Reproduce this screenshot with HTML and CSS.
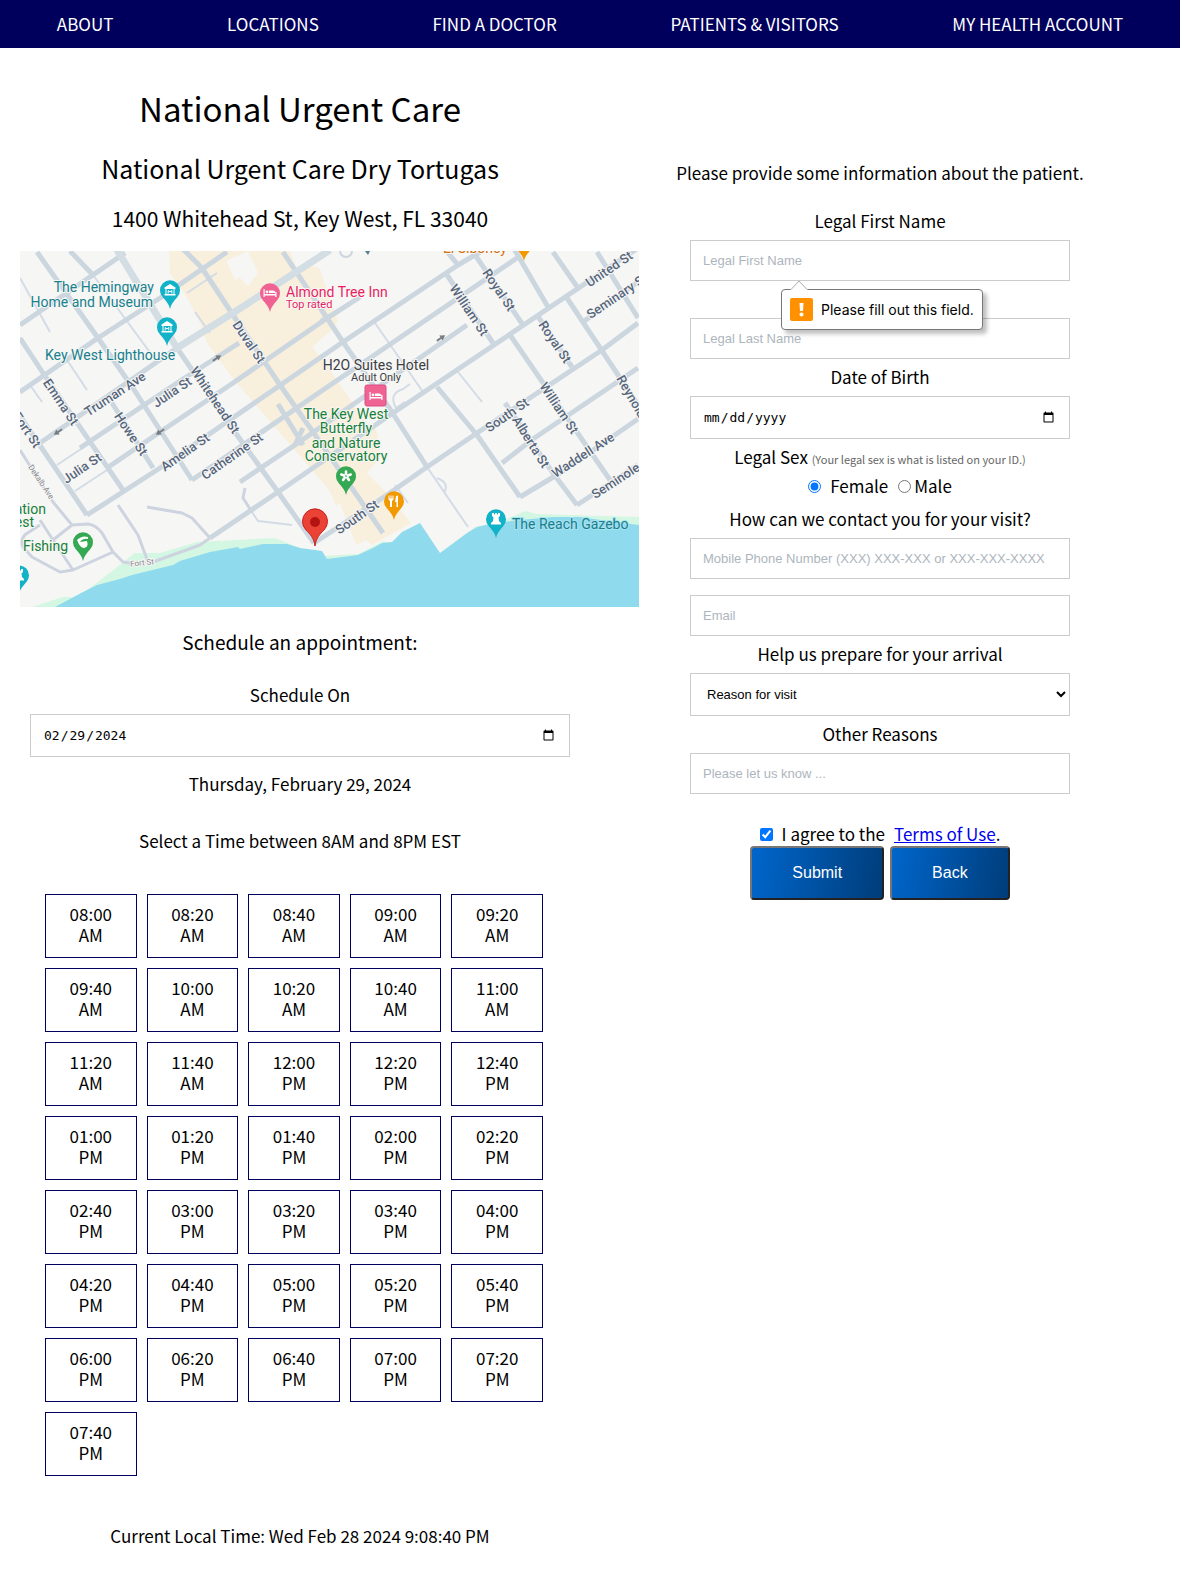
FILE: index.html
```html
<!DOCTYPE html>
<html lang="en">
<head>
<meta charset="utf-8">
<meta name="viewport" content="width=device-width, initial-scale=1">
<title>National Urgent Care</title>
<link rel="stylesheet" href="styles.css">
</head>
<body>
<nav class="nav">
  <a href="#about">ABOUT</a>
  <a href="#locations">LOCATIONS</a>
  <a href="#doctor">FIND A DOCTOR</a>
  <a href="#patients">PATIENTS &amp; VISITORS</a>
  <a href="#account">MY HEALTH ACCOUNT</a>
</nav>
<main class="page">
  <section class="schedule">
    <h1 class="title">National Urgent Care</h1>
    <h2 class="branch">National Urgent Care Dry Tortugas</h2>
    <p class="address">1400 Whitehead St, Key West, FL 33040</p>
    <svg class="map" viewBox="0 0 619 356" role="img" aria-label="Map of Key West">
      <defs>
        <path id="pin" d="M0 19C-1 14-4 11-7 7.500A10 10 0 1 1 7 7.500C4 11 1 14 0 19Z"/>
        <g id="museum" fill="#fff"><path d="M-5.500-2.500L0-6L5.500-2.500V-1H-5.500Z"/><path d="M-4.500-1H-3.500V4H-4.500ZM3.500-1H4.500V4H3.500ZM-5.500 4H5.500V5.500H-5.500Z"/><path d="M-1.800 3.500V0.500L0 2L1.800 0.500V3.500" fill="none" stroke="#fff"/></g>
        <g id="bed" fill="#fff"><path d="M-6.500-4H-5.300V1H5.300V-1H6.500V4H5.300V2.500H-5.300V4H-6.500Z"/><circle cx="-3" cy="-1.200" r="1.400"/><path d="M-1-2.500H3.500Q5.500-2.500 5.500 0H-1Z"/></g>
        <g id="rook" fill="#fff"><path d="M-4-6H-2V-4.500H-1V-6H1V-4.500H2V-6H4V-3L2.500-1.500L3 2L5 4V5.500H-5V4L-3 2L-2.500-1.500L-4-3Z"/></g>
        <path id="arrow" fill="#777d82" d="M-5-1H0V-3L5 0L0 3V1H-5Z"/>
      </defs>
      <rect width="619" height="356" fill="#f6f6f5"/>
      <path fill="#f8efdd" d="M149 0L150 22L168 48L180 72L187 92L215 130L260 182L310 240L316 255L320 252L336 294L346 289L352 294L391 272L365 240L347 222L360 207L357 180L340 165L328 145L300 105L292 96L311 80L318 70L307 40L300 18L288 12L276 16L270 0Z"/>
      <path fill="#f6f6f5" d="M206 10L228 0L238 22L228 35L219 26L216 30Z"/>
      <path fill="#d3f7e2" d="M12 356L43 346L58 346L87 324L115 302L140 302L177 291L255 287L280 297L302 305L338 303L364 290L380 300L430 310L438 289L455 276L480 271L505 260L517 263L619 266V356Z"/>
      <path fill="#90daee" d="M35 356L63 341L77 334L100 328L112 324L153 314L160 310L190 301L218 296L220 298L243 293L267 293L280 297L302 300L307 308L338 304L353 297L362 292L372 291L382 281L400 272L420 302L447 282L457 276L470 273L500 269L533 266L560 266L587 270L619 274V356Z"/>
      <g class="road road-thin">
        <path d="M73 24L137 111M47 109L67 139M10 134L22 151M0 27L30 81M175 61L190 82M167 42L197 22M300 69L337 47M355 72L403 141M438 121L462 151M407 216L448 276M417 227Q430 232 424 242M37 214L70 192M55 240L87 219M220 231L240 217M232 261L238 270L272 274M385 151L376 157Q368 143 383 138L390 133M375 234L388 252"/>
      </g>
      <g class="road road-lane">
        <path d="M0 199L33 251L52 274L68 273Q76 274 82 282L93 301L103 311L115 313L133 311L180 294L190 287M20 274L6 283Q0 288 3 296L12 306L40 321L53 319L93 301M20 269L33 289L53 319M33 289L52 274M98 254L118 284L128 311M127 256L162 262L172 267L190 287M225 237L223 247L232 261"/>
      </g>
      <g class="road">
        <path d="M0 74L105 2M0 141L78 87L140 47L207 1M20 192L157 97M60 197L157 132L219 92M87 217L140 181L213 132L300 72L340 46M67 264L140 217L323 91L438 14L460 1M172 229L300 141L497 7M220 231L275 194L447 74M190 287L258 241L370 164L618-3M294 292L367 244L407 216L457 182L582 99L618 72M482 212L513 188L618 117M500 246L540 222L618 168M557 254L618 214M563 71L618 31"/>
        <path d="M0 87L23 122L103 239M0 165L40 224L67 264M17 1L78 87L113 137L172 229M87 144L133 217M157 97L217 184L258 241L294 292M160-5L182 17L213 64L260 134L300 191L363 282M263 1L323 91L372 161L407 216M417 136L457 184L500 246M427 24L473 92M490 84L590 229M420-8L438 14M451-2L503 74M517 64L552 116M493-4L528 56M533 1L558 37M547 47L618 154M577 1L618 67M485 152L533 222L557 254M283 177L275 194M258 153L283 194M50 0L73 24"/>
      </g>
      <path class="road road-main" d="M97-1L157 97L213 62L310-1"/>
      <use href="#arrow" transform="translate(197 107) rotate(-34)"/>
      <use href="#arrow" transform="translate(38 181) rotate(146)"/>
      <use href="#arrow" transform="translate(140 181) rotate(146)"/>
      <use href="#arrow" transform="translate(421 87) rotate(-34)"/>

      <g class="street">
        <text transform="translate(95 143) rotate(-33)">Truman Ave</text>
        <text transform="translate(152 141) rotate(-34)">Julia St</text>
        <text transform="translate(62 217) rotate(-34)">Julia St</text>
        <text transform="translate(165 201) rotate(-35)">Amelia St</text>
        <text transform="translate(212 205) rotate(-35)">Catherine St</text>
        <text transform="translate(41 151) rotate(56)">Emma St</text>
        <text transform="translate(111 183) rotate(56)">Howe St</text>
        <text transform="translate(195 149) rotate(56)">Whitehead St</text>
        <text transform="translate(229 91) rotate(56)">Duval St</text>
        <text transform="translate(7 179) rotate(56)">Fort St</text>
        <text transform="translate(449 59) rotate(56)">William St</text>
        <text transform="translate(479 39) rotate(56)">Royal St</text>
        <text transform="translate(535 91) rotate(56)">Royal St</text>
        <text transform="translate(539 157) rotate(56)">William St</text>
        <text transform="translate(511 191) rotate(58)">Alberta St</text>
        <text transform="translate(589 18) rotate(-34)">United St</text>
        <text transform="translate(597 45) rotate(-34)">Seminary St</text>
        <text transform="translate(617 155) rotate(60)">Reynolds St</text>
        <text transform="translate(487 164) rotate(-35)">South St</text>
        <text transform="translate(337 266) rotate(-35)">South St</text>
        <text transform="translate(563 204) rotate(-33)">Waddell Ave</text>
        <text transform="translate(606 223) rotate(-33)">Seminole Ave</text>
      </g>
      <g class="lane">
        <text transform="translate(21 231) rotate(56)">Dekalb Ave</text>
        <text transform="translate(122 312) rotate(-6)">Fort St</text>
      </g>

      <g fill="#12b2c8">
        <use href="#pin" x="150" y="39"/><use href="#pin" x="147" y="76"/><use href="#pin" x="476" y="268"/><use href="#pin" x="-1" y="324"/>
      </g>
      <use href="#museum" x="150" y="39"/><use href="#museum" x="147" y="76"/><use href="#rook" x="476" y="268"/><use href="#rook" x="-1" y="324"/>
      <use href="#pin" x="250" y="42" fill="#f06292"/><use href="#bed" x="250" y="42"/>
      <rect x="345" y="134" width="21" height="21" rx="2" fill="#f06292" stroke="#db4f86"/><use href="#bed" x="356" y="145"/>
      <g fill="#34a853"><use href="#pin" x="326" y="225"/><use href="#pin" x="63" y="291"/></g>
      <path d="M326 223V220.500M327.900 224.400L330.700 223.500M327.200 226.600L328.900 229M324.800 226.600L323.100 229M324.100 224.400L321.300 223.500" stroke="#fff" stroke-width="2.600" stroke-linecap="round"/>
      <path fill="#fff" d="M57 289Q62 284 68 286L68 288Q63 287 60 291L67 290Q69 296 64 297Q60 297 57 289Z"/>
      <g fill="#f29900"><use href="#pin" x="374" y="250"/><use href="#pin" x="504" y="-9"/></g>
      <path fill="#fff" d="M368.500 244.500h1v3h1v-3h1v3h1v-3h1v4l-1.500 1.500v6h-2v-6l-1.500-1.500zM376 245q2-1 2 0v11h-1.500v-5h-1.500z"/>
      <path fill="#ea4335" stroke="#c5221f" d="M295 295C294 287 290 283 286 279A12.500 12.500 0 1 1 304 279C300 283 296 287 295 295Z"/>
      <circle cx="295" cy="271" r="5" fill="#b31412"/>

      <g class="place teal">
        <text x="134" y="41" text-anchor="end">The Hemingway</text>
        <text x="133" y="56" text-anchor="end">Home and Museum</text>
        <text x="25" y="109">Key West Lighthouse</text>
      </g>
      <text class="place teal on-water" x="492" y="278">The Reach Gazebo</text>
      <g class="place pink"><text x="266" y="46">Almond Tree Inn</text><text class="note" x="266" y="57">Top rated</text></g>
      <g class="place dark" text-anchor="middle"><text x="356" y="119">H2O Suites Hotel</text><text class="note" x="356" y="130">Adult Only</text></g>
      <g class="place green">
        <g text-anchor="middle"><text x="326" y="168">The Key West</text><text x="326" y="182">Butterfly</text><text x="326" y="197">and Nature</text><text x="326" y="210">Conservatory</text></g>
        <text x="3" y="300">Fishing</text><text x="26" y="263" text-anchor="end">ation</text><text x="14" y="276" text-anchor="end">est</text>
      </g>
      <g class="place orange"><text x="487" y="2" text-anchor="end">El Siboney</text></g>
      <path fill="#527f91" d="M345 0h5l-2 4z"/><circle cx="326" cy="0" r="6" fill="none" stroke="#cbd6df" stroke-width="2"/>
    </svg>

    <h3 class="subhead">Schedule an appointment:</h3>
    <div class="booking">
      <label for="visit-date">Schedule On</label>
      <input class="control date" type="date" id="visit-date" value="2024-02-29">
    </div>
    <p class="chosen">Thursday, February 29, 2024</p>
    <p class="hint">Select a Time between 8AM and 8PM EST</p>
    <div class="slots">
      <button type="button">08:00 AM</button><button type="button">08:20 AM</button><button type="button">08:40 AM</button><button type="button">09:00 AM</button><button type="button">09:20 AM</button>
      <button type="button">09:40 AM</button><button type="button">10:00 AM</button><button type="button">10:20 AM</button><button type="button">10:40 AM</button><button type="button">11:00 AM</button>
      <button type="button">11:20 AM</button><button type="button">11:40 AM</button><button type="button">12:00 PM</button><button type="button">12:20 PM</button><button type="button">12:40 PM</button>
      <button type="button">01:00 PM</button><button type="button">01:20 PM</button><button type="button">01:40 PM</button><button type="button">02:00 PM</button><button type="button">02:20 PM</button>
      <button type="button">02:40 PM</button><button type="button">03:00 PM</button><button type="button">03:20 PM</button><button type="button">03:40 PM</button><button type="button">04:00 PM</button>
      <button type="button">04:20 PM</button><button type="button">04:40 PM</button><button type="button">05:00 PM</button><button type="button">05:20 PM</button><button type="button">05:40 PM</button>
      <button type="button">06:00 PM</button><button type="button">06:20 PM</button><button type="button">06:40 PM</button><button type="button">07:00 PM</button><button type="button">07:20 PM</button>
      <button type="button">07:40 PM</button>
    </div>
    <p class="clock">Current Local Time: Wed Feb 28 2024 9:08:40 PM</p>
  </section>

  <section class="patient">
    <p class="intro">Please provide some information about the patient.</p>
    <form class="form" novalidate>
      <label for="first">Legal First Name</label>
      <div class="field">
        <input class="control" type="text" id="first" placeholder="Legal First Name" required>
        <div class="tip" role="alert">
          <svg class="tip-arrow" viewBox="0 0 18 10" aria-hidden="true"><path d="M1 9.500L9 1L17 9.500V10H1Z" fill="#fff"/><path d="M0 9.500H1L9 1L17 9.500H18" fill="none" stroke="#aaa"/></svg>
          <svg class="tip-icon" viewBox="0 0 23 23" aria-hidden="true"><rect width="23" height="23" rx="2" fill="#ff9100"/><path d="M9.500 5H13.500L13 13H10Z" fill="#fff"/><circle cx="11.500" cy="16.500" r="2" fill="#fff"/></svg>
          <span>Please fill out this field.</span>
        </div>
      </div>
      <input class="control" type="text" id="last" placeholder="Legal Last Name" aria-label="Legal Last Name">
      <label for="dob">Date of Birth</label>
      <input class="control date" type="date" id="dob">
      <p class="legend">Legal Sex <small>(Your legal sex is what is listed on your ID.)</small></p>
      <div class="choices">
        <input type="radio" name="sex" id="female" checked><label class="female" for="female">Female</label>
        <input type="radio" name="sex" id="male"><label for="male">Male</label>
      </div>
      <label for="phone">How can we contact you for your visit?</label>
      <input class="control" type="tel" id="phone" placeholder="Mobile Phone Number (XXX) XXX-XXX or XXX-XXX-XXXX">
      <input class="control" type="email" id="email" placeholder="Email" aria-label="Email">
      <label for="reason">Help us prepare for your arrival</label>
      <select class="control select" id="reason"><option>Reason for visit</option></select>
      <label for="other">Other Reasons</label>
      <input class="control" type="text" id="other" placeholder="Please let us know ...">
      <div class="agree">
        <input type="checkbox" id="agree" checked>
        <label for="agree">I agree to the</label>
        <span><a href="#terms">Terms of Use</a>.</span>
      </div>
      <div class="actions">
        <button class="action" type="submit">Submit</button>
        <button class="action" type="button">Back</button>
      </div>
    </form>
  </section>
</main>
</body>
</html>
```
FILE: styles.css
```css
* { box-sizing: border-box; }

body {
  margin: 0;
  background: #fff;
  color: #000;
  font: 17px/19px "Noto Sans CJK JP", "Noto Sans", sans-serif;
}

h1, h2, h3, p { margin: 0; font-weight: 400; }
p, label { padding-bottom: 2px; }

.nav {
  display: flex;
  justify-content: space-around;
  align-items: center;
  min-height: 48px;
  background: #00005c;
}
.nav a { padding-bottom: 2px; color: #fff; text-decoration: none; }

.page {
  display: grid;
  grid-template-columns: 600fr 560fr;
  margin-right: 20px;
  text-align: center;
}

/* Left column: clinic and time slots */
.schedule { padding: 40px 20px 47px; }
.title { font-size: 33px; line-height: 40px; }
.branch { margin-top: 24px; font-size: 25px; line-height: 32px; }
.address { margin-top: 20px; padding: 0; font-size: 21px; line-height: 28px; }
.map {
  display: block;
  width: calc(100% + 59px);
  margin-top: 19px;
}
.subhead { margin-top: 23px; font-size: 19px; line-height: 24px; }
.booking { margin-top: 31px; padding: 0 10px; }
.booking label { display: block; }
.chosen { margin-top: 17px; }
.hint { margin-top: 36px; }
.slots {
  display: grid;
  grid-template-columns: repeat(5, 1fr);
  gap: 10px;
  margin: 42px 37px 50px 25px;
}
.slots button {
  padding: 8px 16px 12px;
  border: 1px solid #00005c;
  background: #fff;
  color: #000;
  font: inherit;
  line-height: 21px;
}

/* Map styling */
.road { fill: none; stroke: #cbd6df; stroke-width: 5; stroke-linejoin: round; }
.road-thin { stroke: #d3dce6; stroke-width: 2; }
.road-lane { stroke: #cdd4e0; stroke-width: 3; }
.road-main { stroke: #d3dde4; stroke-width: 7; }
.street, .lane, .place {
  font-family: Roboto, sans-serif;
  paint-order: stroke;
  stroke: #f6f6f5;
  stroke-width: 2px;
}
.street { font-size: 13px; font-weight: 500; fill: #56667c; text-anchor: middle; dominant-baseline: central; }
.lane { font-size: 8px; fill: #86898e; text-anchor: middle; dominant-baseline: central; }
.place { font-size: 14px; }
.note { font-size: 11px; }
.teal { fill: #16808d; }
.on-water { stroke: #a9e2f1; }
.pink { fill: #e91e63; }
.dark { fill: #3c4043; }
.green { fill: #188038; }
.orange { fill: #d56e0c; }

/* Right column: patient form */
.patient { padding-top: 115px; }
.form {
  display: flex;
  flex-direction: column;
  max-width: 380px;
  margin: 27px auto 0;
}
.field { position: relative; margin-bottom: 21px; }
.control {
  display: block;
  width: 100%;
  height: 41px;
  margin: 8px 0;
  padding: 0 12px;
  border: 1px solid #ccc;
  border-radius: 0;
  background: #fff;
  color: #000;
  font: 13px "Liberation Sans", sans-serif;
}
.control::placeholder { color: #adb5bd; opacity: 1; }
.date { height: 43px; font: 13px "DejaVu Sans Mono", monospace; }
.select { height: 43px; }
.legend small { color: #666; font-size: 11px; line-height: 11px; }

.choices {
  display: flex;
  justify-content: center;
  align-items: center;
  margin: 8px 0 12px;
}
.choices input, .agree input { width: 13px; height: 13px; margin: 0; }
.choices label { margin-left: 3px; }
.choices .female { margin: 0 10px 0 9px; }

.agree {
  display: flex;
  justify-content: center;
  align-items: center;
  gap: 9px;
  margin-top: 22px;
}
.agree span { padding-bottom: 2px; }
.agree a { color: #0000ee; }
.actions { display: flex; justify-content: center; gap: 6px; margin-top: 1px; }
.action {
  padding: 16px 40px;
  border: 2px solid;
  border-color: #767676 #222 #222 #767676;
  border-radius: 4px;
  background: linear-gradient(100deg, #0066cc, #003d7a);
  color: #fff;
  font: 16px/18px "Liberation Sans", sans-serif;
}

/* Validation bubble under the first name */
.tip {
  position: absolute;
  z-index: 1;
  top: 57px;
  left: 91px;
  display: flex;
  align-items: center;
  gap: 8px;
  padding: 8px;
  border: 1px solid #777;
  border-radius: 4px;
  background: #fff;
  box-shadow: 4px 4px 4px rgba(0, 0, 0, 0.25);
  font: 14px/23px Inter, sans-serif;
  white-space: nowrap;
}
.tip-arrow { position: absolute; top: -10px; left: 8px; width: 18px; height: 10px; }
.tip-icon { width: 23px; height: 23px; }
```
